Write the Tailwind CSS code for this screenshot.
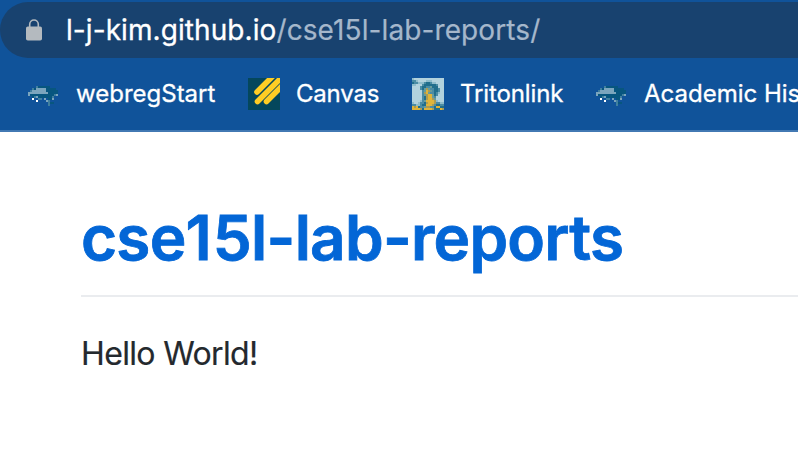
<!DOCTYPE html>
<html lang="en">
<head>
<meta charset="utf-8">
<title>cse15l-lab-reports</title>
<script src="https://cdn.jsdelivr.net/npm/@tailwindcss/browser@4"></script>
</head>
<body class="w-[798px] h-[472px] overflow-hidden bg-white font-['Inter',sans-serif]">
<header class="h-[132px] bg-[#10539a] border-b-2 border-[#4279b3] pt-0.5 overflow-hidden">
  <div class="h-14 w-[900px] bg-[#18426f] rounded-l-full flex items-center whitespace-nowrap">
    <svg class="ml-[26px] w-4 h-[22px] shrink-0" viewBox="0 0 16 22"><path d="M3.7 9V5.3a4.3 4.3 0 0 1 8.6 0V9" fill="none" stroke="#b4babf" stroke-width="1.6"/><rect y="7.5" width="16" height="14" rx="1.8" fill="#b4babf"/></svg>
    <div class="ml-6 text-[28px] leading-[34px] text-[#a5b7cb]"><span class="text-white tracking-[0.08px] [-webkit-text-stroke:0.3px_white]">l-j-kim.github.io</span><span class="tracking-[0.1px] [-webkit-text-stroke:0.2px_#a5b7cb]">/cse15l-lab-reports/</span></div>
  </div>
  <nav class="h-[72px] flex items-center pl-7 w-[1000px] text-white text-[24px] leading-8 whitespace-nowrap [-webkit-text-stroke:0.3px_white]">
    <svg data-icon="fish" class="size-8 shrink-0" viewBox="0 0 16 16" shape-rendering="crispEdges" stroke-width="0"></svg>
    <span class="ml-4 w-[172px]"><span>webregStart</span></span>
    <svg class="size-8 shrink-0" viewBox="0 0 32 32"><path fill="#04475c" stroke="none" d="M0 0h32v32H0z"/><path d="M9 14 25-2M9.5 23.5 34-1M18.5 23.5 35 7" fill="none" stroke="#ffcd24" stroke-width="5.6" stroke-linecap="round"/></svg>
    <span class="ml-4 w-[116px] tracking-[-0.2px]"><span>Canvas</span></span>
    <svg data-icon="triton" class="size-8 shrink-0" viewBox="0 0 16 16" shape-rendering="crispEdges" stroke-width="0"></svg>
    <span class="ml-4 w-[136px] tracking-[-0.12px]"><span>Tritonlink</span></span>
    <svg data-icon="fish" class="size-8 shrink-0" viewBox="0 0 16 16" shape-rendering="crispEdges" stroke-width="0"></svg>
    <span class="ml-4"><span>Academic His</span></span>
  </nav>
</header>
<main class="pl-[81px] pt-16 text-[#24292e]">
  <h1 class="h-[101px] border-b-2 border-[#eaecef] pt-[2px] text-[62px] leading-[80px] font-semibold tracking-[-0.75px] text-[#0366d6] [-webkit-text-stroke:0.8px_#0366d6] whitespace-nowrap"><a>cse<span class="tracking-[1px]">1</span>5l-lab-reports</a></h1>
  <p class="mt-[33px] text-[32px] leading-[48px] tracking-[-0.65px] [-webkit-text-stroke:0.2px_#24292e]"><span>Hello World!</span></p>
</main>
<script>
const palette = {d:'#07567f', l:'#7ba5bd', m:'#3f7f9f', w:'#ffffff', b:'#b2d2dd', c:'#8fbccb', t:'#4a8ca4', n:'#216e8c', y:'#dfb43a', o:'#a99b55', g:'#699c9b'};
const icons = {
  fish: ['','','','','....mdddddd.....','..mdlllllddddd..','.mllllllldddddd.','llllllllllddddd.','lddddddddddddml.','..dmldddddddm...','..w..mm.l.ddl...','....w....lm.....','..........mdd...','..........m.....'],
  triton: ['cbbbbbbbbbbbbbbb','ttcbbbbcccbbbbbb','nttccctnntccbbbb','ccbbbtnnnnnntbbb','bbbbtnnttgnnnbbb','bbbbtngogttnntbb','bbbbbtgyogtnntbb','bbbbbtoygttntcbb','bbbbbtgoyygntbbb','bbbbbtnoyygtbbbb','bbbbbtnoyyogbbbb','bbbbctgyyyyocbbb','cbbcttnoyyyottcc','ttcctnnyyyotnntt','yoynttgoottnyynn','yyyyonyyyyonnnyo']
};
document.querySelectorAll('[data-icon]').forEach(svg => {
  icons[svg.dataset.icon].forEach((row, y) => [...row].forEach((k, x) => {
    if (!palette[k]) return;
    const r = document.createElementNS('http://www.w3.org/2000/svg', 'rect');
    for (const [a, v] of Object.entries({x, y, width: 1, height: 1, fill: palette[k]})) r.setAttribute(a, v);
    svg.append(r);
  }));
});
</script>
</body>
</html>
